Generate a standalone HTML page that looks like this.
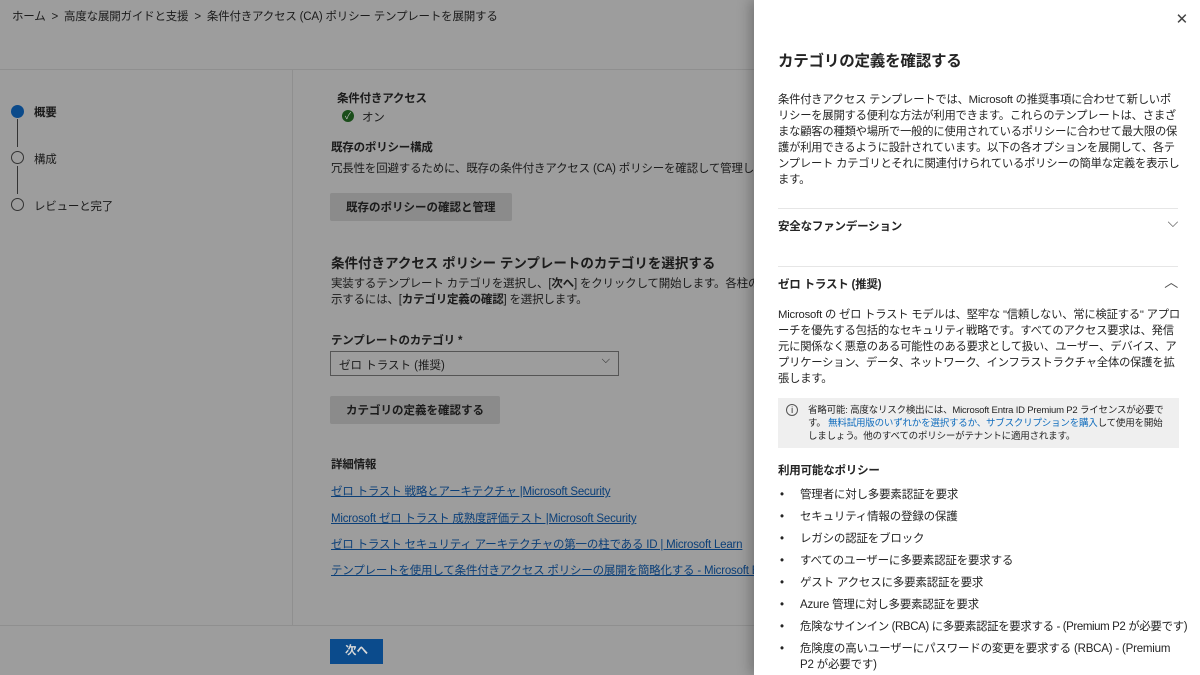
<!DOCTYPE html>
<html><head><meta charset="utf-8"><style>
*{margin:0;padding:0;box-sizing:border-box}
html,body{width:1200px;height:675px;overflow:hidden}
body{position:relative;background:#9d9d9d;font-family:"Liberation Sans","Noto Sans CJK JP",sans-serif;color:#1b1b1b}
.a{position:absolute;white-space:nowrap}
.s12{font-size:11.5px;letter-spacing:-0.2px}.b{font-weight:bold}
.lk{color:#0b3f78;text-decoration:underline;font-size:11.5px;letter-spacing:-0.2px}
.btn{position:absolute;background:#8b8b8b;font-size:11.5px;font-weight:bold;padding:6px 16px;border-radius:2px}
.panel{position:absolute;left:754px;top:0;width:446px;height:675px;overflow:hidden;background:#fff;box-shadow:-4px 0 12px rgba(0,0,0,.25);color:#242424;letter-spacing:-0.2px}
.panel .a{font-size:11.5px}
.hr{position:absolute;left:24px;right:22px;height:1px;background:#e6e6e6}
ul{position:absolute;left:26px;top:484px;list-style:none;font-size:11.5px;line-height:22px}
ul li:before{content:"•";position:absolute;left:0}
ul li{padding-left:20px;white-space:nowrap}
</style></head><body>
<div class="a s12" style="left:12px;top:8px">ホーム &nbsp;&gt;&nbsp; 高度な展開ガイドと支援 &nbsp;&gt;&nbsp; 条件付きアクセス (CA) ポリシー テンプレートを展開する</div>
<div style="position:absolute;left:0;top:69px;width:754px;height:1px;background:#8f8f8f"></div>
<div style="position:absolute;left:292px;top:70px;width:1px;height:556px;background:#8f8f8f"></div>
<div style="position:absolute;left:0;top:625px;width:754px;height:1px;background:#8f8f8f"></div>
<div style="position:absolute;left:11px;top:105px;width:13px;height:13px;border-radius:50%;background:#0b4a8a"></div>
<div style="position:absolute;left:17px;top:119px;width:1px;height:28px;background:#333"></div>
<div style="position:absolute;left:11px;top:151px;width:13px;height:13px;border-radius:50%;border:1px solid #333"></div>
<div style="position:absolute;left:17px;top:166px;width:1px;height:28px;background:#333"></div>
<div style="position:absolute;left:11px;top:198px;width:13px;height:13px;border-radius:50%;border:1px solid #333"></div>
<div class="a s12 b" style="left:34px;top:104px">概要</div>
<div class="a s12" style="left:34px;top:151px">構成</div>
<div class="a s12" style="left:34px;top:198px">レビューと完了</div>
<div class="a s12 b" style="left:337px;top:90px">条件付きアクセス</div>
<div style="position:absolute;left:342px;top:110px;width:12px;height:12px;border-radius:50%;background:#1a4d1a;color:#bbb;font-size:9px;line-height:12px;text-align:center">✓</div>
<div class="a s12" style="left:362px;top:109px">オン</div>
<div class="a s12 b" style="left:331px;top:139px">既存のポリシー構成</div>
<div class="a s12" style="left:331px;top:160px">冗長性を回避するために、既存の条件付きアクセス (CA) ポリシーを確認して管理しま</div>
<div class="btn" style="left:330px;top:193px">既存のポリシーの確認と管理</div>
<div class="a b" style="left:331px;top:252px;font-size:13.5px">条件付きアクセス ポリシー テンプレートのカテゴリを選択する</div>
<div class="a s12" style="left:331px;top:275px">実装するテンプレート カテゴリを選択し、[<b>次へ</b>] をクリックして開始します。各柱のポ</div>
<div class="a s12" style="left:331px;top:291px">示するには、[<b>カテゴリ定義の確認</b>] を選択します。</div>
<div class="a s12 b" style="left:331px;top:332px">テンプレートのカテゴリ *</div>
<div style="position:absolute;left:330px;top:351px;width:289px;height:25px;border:1px solid #555;font-size:11.5px;padding:5px 8px">ゼロ トラスト (推奨)<span style="position:absolute;right:8px;top:2px;font-size:11px">⌵</span></div>
<div class="btn" style="left:330px;top:396px">カテゴリの定義を確認する</div>
<div class="a s12 b" style="left:331px;top:456px">詳細情報</div>
<div class="a lk" style="left:331px;top:483px">ゼロ トラスト 戦略とアーキテクチャ |Microsoft Security</div>
<div class="a lk" style="left:331px;top:510px">Microsoft ゼロ トラスト 成熟度評価テスト |Microsoft Security</div>
<div class="a lk" style="left:331px;top:536px">ゼロ トラスト セキュリティ アーキテクチャの第一の柱である ID | Microsoft Learn</div>
<div class="a lk" style="left:331px;top:562px">テンプレートを使用して条件付きアクセス ポリシーの展開を簡略化する - Microsoft Ent</div>
<div style="position:absolute;left:330px;top:639px;width:53px;height:25px;background:#0b4b8c;color:#d8d8d8;font-size:11.5px;font-weight:bold;text-align:center;line-height:25px">次へ</div>

<div class="panel">
<div class="a" style="right:12px;top:10px;font-size:15px!important;color:#444">✕</div>
<div class="a b" style="left:24px;top:49px;font-size:15.5px!important">カテゴリの定義を確認する</div>
<div style="position:absolute;left:24px;top:92px;width:404px;font-size:11.3px;line-height:16px">条件付きアクセス テンプレートでは、Microsoft の推奨事項に合わせて新しいポリシーを展開する便利な方法が利用できます。これらのテンプレートは、さまざまな顧客の種類や場所で一般的に使用されているポリシーに合わせて最大限の保護が利用できるように設計されています。以下の各オプションを展開して、各テンプレート カテゴリとそれに関連付けられているポリシーの簡単な定義を表示します。</div>
<div class="hr" style="top:208px"></div>
<div class="a b" style="left:24px;top:218px">安全なファンデーション</div>
<div class="a" style="right:22px;top:214px;font-size:14px!important;color:#555">⌵</div>
<div class="hr" style="top:266px"></div>
<div class="a b" style="left:24px;top:276px">ゼロ トラスト (推奨)</div>
<div class="a" style="right:22px;top:272px;font-size:14px!important;color:#555">︿</div>
<div style="position:absolute;left:24px;top:307px;width:404px;font-size:11.3px;line-height:16px">Microsoft の ゼロ トラスト モデルは、堅牢な "信頼しない、常に検証する" アプローチを優先する包括的なセキュリティ戦略です。すべてのアクセス要求は、発信元に関係なく悪意のある可能性のある要求として扱い、ユーザー、デバイス、アプリケーション、データ、ネットワーク、インフラストラクチャ全体の保護を拡張します。</div>
<div style="position:absolute;left:24px;top:398px;width:401px;height:50px;background:#efefef;font-size:9.5px;line-height:13px;padding:6px 10px 0 30px">
<span style="position:absolute;left:8px;top:6px;width:12px;height:12px;border:1px solid #555;border-radius:50%;font-size:9px;line-height:10px;text-align:center">i</span>
省略可能: 高度なリスク検出には、Microsoft Entra ID Premium P2 ライセンスが必要です。 <span style="color:#0f6cbd">無料試用版のいずれかを選択するか、サブスクリプションを購入</span>して使用を開始しましょう。他のすべてのポリシーがテナントに適用されます。</div>
<div class="a b" style="left:24px;top:462px">利用可能なポリシー</div>
<ul>
<li>管理者に対し多要素認証を要求</li>
<li>セキュリティ情報の登録の保護</li>
<li>レガシの認証をブロック</li>
<li>すべてのユーザーに多要素認証を要求する</li>
<li>ゲスト アクセスに多要素認証を要求</li>
<li>Azure 管理に対し多要素認証を要求</li>
<li style="letter-spacing:-0.4px">危険なサインイン (RBCA) に多要素認証を要求する - (Premium P2 が必要です)</li>
<li style="line-height:16px;padding-top:3px;white-space:normal;width:400px">危険度の高いユーザーにパスワードの変更を要求する (RBCA) - (Premium P2 が必要です)</li>
</ul>
</div>
</body></html>
